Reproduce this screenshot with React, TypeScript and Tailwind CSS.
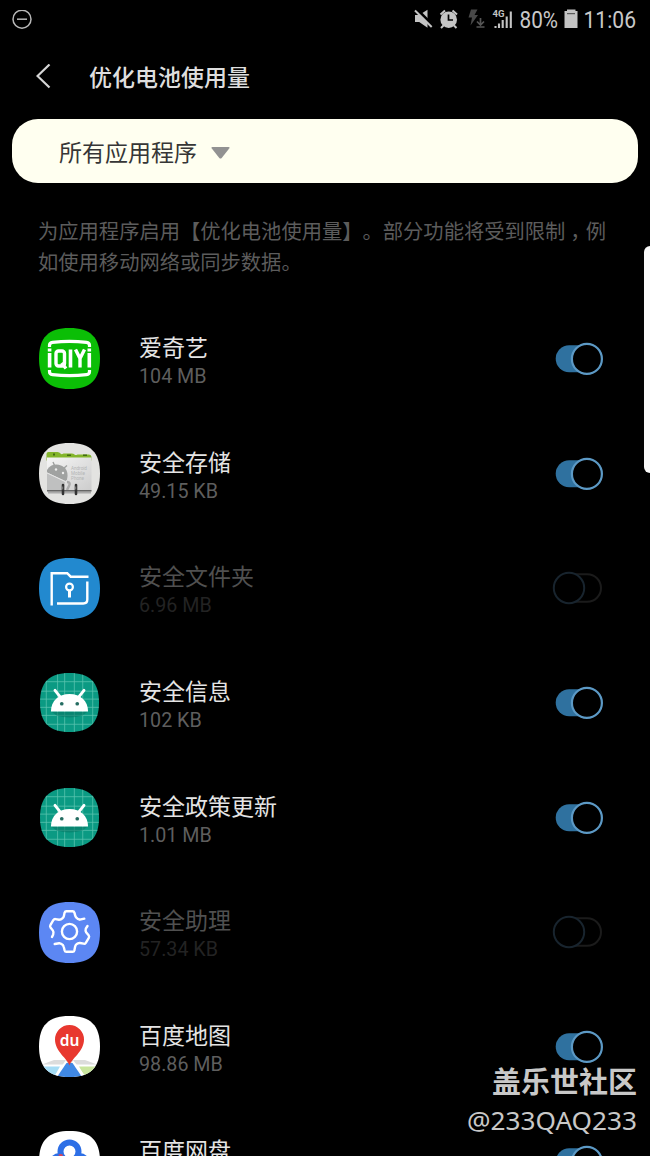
import type { ReactNode } from "react";

const SQUIRCLE = "M30.5 0C51.500 0 61 9.500 61 30.5S51.500 61 30.5 61S0 51.500 0 30.5S9.500 0 30.5 0Z";

function IconFrame({ id, fill, children }: { id: string; fill: string; children: ReactNode }) {
  return (
    <svg className="block h-[61px] w-[61px]" viewBox="0 0 61 61" fill="none">
      <clipPath id={id}>
        <path d={SQUIRCLE} />
      </clipPath>
      <g clipPath={`url(#${id})`}>
        <rect width="61" height="61" fill={fill} />
        {children}
      </g>
    </svg>
  );
}

function IqiyiIcon() {
  return (
    <IconFrame id="iqiyi" fill="#0bbe06">
      <path d="M10.500 19v-1.500c0-2 1-3 3-3.200q17-2 34 0c2 .2 3 1.200 3 3.200V19" stroke="#fff" strokeWidth="3.200" />
      <path d="M10.500 42v1.500c0 2 1 3 3 3.200q17 2 34 0c2-.2 3-1.200 3-3.200V42" stroke="#fff" strokeWidth="3.200" />
      <path d="M10.600 25v14.500M31.500 21.500v18M50.300 25v14.500M10.600 20.500v3M50.300 20.500v3" stroke="#fff" strokeWidth="3.600" />
      <rect x="17" y="23" width="8.500" height="15" rx="2.500" stroke="#fff" strokeWidth="3.400" />
      <path d="M22.500 35l4.500 5.500M36.500 21.500l4.500 9v9M45.500 21.500l-4.500 9" stroke="#fff" strokeWidth="3.400" />
    </IconFrame>
  );
}

function StorageIcon() {
  return (
    <IconFrame id="storage" fill="#e3e3e1">
      <defs>
        <linearGradient id="card" x1="0" y1="0" x2="1" y2="1">
          <stop offset="0" stopColor="#f6f6f6" />
          <stop offset="1" stopColor="#cccccc" />
        </linearGradient>
        <clipPath id="cardclip">
          <rect x="8" y="14" width="44.500" height="34" />
        </clipPath>
      </defs>
      <path d="M9 48.500h43v2H9z" fill="#aaa" />
      <path d="M7.500 11q0-2 2-2h9q2 0 3 1.500t3 0h8q2 0 3 1t3 0h11q3 0 3 3v3h-45z" fill="#83b52b" />
      <path d="M14 10.500h2v2h-2zM28 11.500h4v1.500h-4zM44 11.500h4v1.500h-4z" fill="#426a12" />
      <rect x="8" y="14.500" width="44.500" height="33.500" fill="url(#card)" />
      <g clipPath="url(#cardclip)">
        <path d="M7 29c3-7 9-9 15-6.500s7.500 8 6 14l-1.500 1.500L7 29z" fill="#a0a2a1" />
        <path d="M14 19l2 4.500M28 22.500l-3.500 3" stroke="#a0a2a1" strokeWidth="1.400" />
        <circle cx="17" cy="26.500" r="1.200" fill="#eee" />
        <circle cx="24" cy="30" r="1.200" fill="#eee" />
        <path d="M7 29.500l19 9-1 9.500H7z" fill="#bfc0c0" />
        <path d="M7 29.500l19 9" stroke="#e5e5e5" />
        <path d="M28 39q4 0 2 4l-2 4" stroke="#aaa" strokeWidth="2.500" />
      </g>
      <path d="M8 47.800h44.500" stroke="#666" strokeWidth="1.500" />
      <g fill="#b3b5b5" fontFamily="Roboto, sans-serif" fontSize="4.600">
        <text x="32" y="26.500">Android</text>
        <text x="32" y="31.500">Mobile</text>
        <text x="32" y="36.500">Phone</text>
      </g>
      <path d="M24 42v9M37 42v9" stroke="#333" strokeWidth="2.600" strokeLinecap="round" />
      <path d="M23.700 43.500v3M36.700 43.500v3" stroke="#888" strokeWidth="1" />
    </IconFrame>
  );
}

function FolderIcon() {
  return (
    <IconFrame id="folder" fill="#2289cf">
      <path d="M12.700 47.500V15.200h15.500l3.500 3.500H49.500" stroke="#fff" strokeWidth="2.400" />
      <path d="M48.300 23.500v18q0 4-4 4H18" stroke="#fff" strokeWidth="2.400" />
      <circle cx="30.500" cy="29" r="3.400" stroke="#fff" strokeWidth="2.200" />
      <path d="M30.500 32v7.500" stroke="#fff" strokeWidth="3" />
    </IconFrame>
  );
}

function AndroidIcon({ id }: { id: string }) {
  return (
    <svg className="mx-px mt-px mb-0.5 block h-[59px] w-[59px]" viewBox="0 0 61 61" fill="none">
      <clipPath id={id}>
        <path d={SQUIRCLE} />
      </clipPath>
      <g clipPath={`url(#${id})`}>
        <rect width="61" height="61" fill="#0b9a83" />
        <path
          d="M6.500 0v61M18.200 0v61M25.500 0v61M35.500 0v61M44.200 0v61M54.500 0v61M0 9h61M0 18.800h61M0 27h61M0 35.500h61M0 43.800h61M0 53h61"
          stroke="#5bc4af"
          strokeWidth=".8"
        />
        <path d="M12 40l5 4q13 4 27 0l5-4z" fill="#087866" opacity=".6" />
        <path d="M11.300 39.800c0-11 8-18.200 19.200-18.200s19.200 7.200 19.200 18.200z" fill="#fff" />
        <path d="M15.500 18l6 7.500M45.500 18l-6 7.500" stroke="#fff" strokeWidth="3" strokeLinecap="round" />
        <circle cx="22.500" cy="31.800" r="1.900" fill="#256d62" />
        <circle cx="38.500" cy="31.800" r="1.900" fill="#256d62" />
      </g>
    </svg>
  );
}

function GearIcon() {
  return (
    <IconFrame id="gear" fill="#5c87f3">
      <circle cx="30.500" cy="29.500" r="7.600" stroke="#fff" strokeWidth="2.400" />
      <path
        d="M13 35l1.200-2.600q.8-2.400-.4-4l-2.300-3q-.8-1.300 0-2.600l2.800-4.700q.8-1.200 2.200-1l3.600.6q2 0 3.300-1.300 1.200-1 1.500-2.500l.7-3.300q.4-1.300 1.800-1.300h6.200q1.400 0 1.800 1.300l.9 3.300q.5 2 2.500 3l2 .8 4.500-1"
        stroke="#fff"
        strokeWidth="2.400"
        strokeLinecap="round"
        strokeLinejoin="round"
      />
      <path
        d="M48.500 24l-1.700 2.700q-.7 2 .5 3.800l2.300 2.700q1 1.300.2 2.600l-3 5q-.8 1.200-2.200.9l-3.600-.7q-2-.2-3.400 1.200-1.200 1-1.500 2.500l-.7 3.600q-.4 1.400-1.800 1.400h-6.200q-1.400 0-1.800-1.400l-.9-3.600q-.4-2-2.500-2.900l-2-.6-4.500.8"
        stroke="#fff"
        strokeWidth="2.400"
        strokeLinecap="round"
        strokeLinejoin="round"
      />
    </IconFrame>
  );
}

function MapIcon() {
  return (
    <IconFrame id="map" fill="#fff">
      <path d="M15 44h31l12 4.500H3z" fill="#dcdcdc" />
      <path d="M0 50.500h21L15 61H0z" fill="#a5dcf5" />
      <path d="M40 50.500h21V61H46z" fill="#c9e59e" />
      <path d="M27 44L15 61h4l10-12zM34 44l13 17h-4L32 49z" fill="#fff" />
      <path d="M27.500 47h6L43 61H18z" fill="#4089e5" />
      <path d="M30.500 49.500c-2-7-14.500-14-14.500-26a14.500 14.500 0 0 1 29 0C45 35.500 32.500 42.500 30.500 49.500z" fill="#e8382f" />
      <text x="30.500" y="29.500" textAnchor="middle" fill="#fff" fontFamily="'Noto Sans', sans-serif" fontWeight="600" fontSize="15.500">
        du
      </text>
    </IconFrame>
  );
}

function DiskIcon() {
  return (
    <IconFrame id="disk" fill="#fff">
      <circle cx="20.500" cy="32.500" r="10.500" fill="#2d6fe6" />
      <circle cx="40.500" cy="32.500" r="10.500" fill="#2d6fe6" />
      <circle cx="30.500" cy="20.500" r="9" fill="#fff" stroke="#2d6fe6" strokeWidth="6" />
      <path d="M19 24q3-2 5 0l-1 2z" fill="#d9445a" />
    </IconFrame>
  );
}

function Toggle({ on }: { on: boolean }) {
  return on ? (
    <svg className="block h-9 w-[52px]" viewBox="0 0 52 36" fill="none">
      <rect x="3.700" y="4.300" width="40" height="27" rx="13.500" fill="#2f719f" />
      <circle cx="34.900" cy="17.900" r="15" fill="#000" stroke="#5c99c5" strokeWidth="2.200" />
    </svg>
  ) : (
    <svg className="block h-9 w-[52px]" viewBox="0 0 52 36" fill="none">
      <rect x="10" y="4.200" width="39" height="27.500" rx="13.750" stroke="#1b1b1b" strokeWidth="2" />
      <circle cx="17" cy="18" r="15.200" fill="#000" stroke="#18242e" strokeWidth="2" />
    </svg>
  );
}

const apps: { name: string; size: string; on: boolean; dim?: boolean; icon: ReactNode }[] = [
  { name: "爱奇艺", size: "104 MB", on: true, icon: <IqiyiIcon /> },
  { name: "安全存储", size: "49.15 KB", on: true, icon: <StorageIcon /> },
  { name: "安全文件夹", size: "6.96 MB", on: false, dim: true, icon: <FolderIcon /> },
  { name: "安全信息", size: "102 KB", on: true, icon: <AndroidIcon id="android-info" /> },
  { name: "安全政策更新", size: "1.01 MB", on: true, icon: <AndroidIcon id="android-policy" /> },
  { name: "安全助理", size: "57.34 KB", on: false, dim: true, icon: <GearIcon /> },
  { name: "百度地图", size: "98.86 MB", on: true, icon: <MapIcon /> },
  { name: "百度网盘", size: "", on: true, icon: <DiskIcon /> },
];

function StatusBar() {
  return (
    <header className="flex h-10 shrink-0 items-center justify-between pr-[14px] pl-3 text-[#c4c4c4]">
      <svg className="h-5 w-5" viewBox="0 0 20 20" fill="none" stroke="#b8b8b8" strokeWidth="1.500">
        <circle cx="10" cy="9.200" r="9" />
        <path d="M5 9.200h10" />
      </svg>
      <div className="flex h-10 items-center">
        <svg className="h-10 w-[112px]" viewBox="402 0 112 40" fill="none">
          <path d="M415 15h4.200l8.300-5.300v18l-8.300-5.700H415z" fill="#c4c4c4" />
          <path d="M416.500 9L433 25.500" stroke="#000" strokeWidth="3" />
          <path d="M415 10.500L431.700 27" stroke="#c4c4c4" strokeWidth="2" />
          <circle cx="448.700" cy="19.700" r="8.300" fill="#c4c4c4" />
          <path d="M440.500 14.500l4.500-4M457 14.500l-4.500-4M443.500 25.500l-2.500 2.500M454 25.500l2.500 2.500" stroke="#c4c4c4" strokeWidth="2" />
          <path d="M448.500 14.500V20h4.500" stroke="#000" strokeWidth="1.700" />
          <path d="M471 9.500h6.500l-3 5.500h3.500l-7.500 10.500 1.500-8h-3.500z" fill="#484848" />
          <path d="M480.500 18v6M477 21.500l3.500 3.500 3.500-3.500M476.500 27h8" stroke="#555" strokeWidth="1.700" />
          <text x="492.500" y="17.300" fill="#c4c4c4" fontFamily="Roboto, sans-serif" fontWeight="700" fontSize="9" textLength="12" lengthAdjust="spacingAndGlyphs">
            4G
          </text>
          <path d="M495.500 28v-2M499 28v-4.500M502.700 28v-8M506.700 28V16.500M510.800 28V11.500" stroke="#c4c4c4" strokeWidth="2.100" />
        </svg>
        <svg className="h-10 w-[136px]" viewBox="514 0 136 40" fill="none">
          <g fill="#c8c8c8" fontFamily="Roboto, sans-serif" fontSize="24.500">
            <text x="519.500" y="28" textLength="38.500" lengthAdjust="spacingAndGlyphs">80%</text>
            <text x="583.500" y="28" textLength="52.500" lengthAdjust="spacingAndGlyphs">11:06</text>
          </g>
          <path d="M567 9.500h8.500V11h2v17h-13V11h2.500z" fill="#c4c4c4" />
          <path d="M567 13.700h8" stroke="#444" strokeWidth="1" />
        </svg>
      </div>
    </header>
  );
}

export default function App() {
  return (
    <div className="relative flex h-[1156px] w-[650px] flex-col overflow-hidden bg-black font-['Roboto','Noto_Sans_CJK_SC',sans-serif] [text-spacing-trim:space-all]">
      <div className="-mr-[14px] w-[664px]">
        <StatusBar />
      </div>
      <div className="flex h-[79px] shrink-0 items-start pt-5 pl-9">
        <svg className="mt-1 h-8 w-5" viewBox="0 0 20 32" fill="none">
          <path d="M13.500 .5L1.500 12l12 11.500" stroke="#d5d5d5" strokeWidth="2.200" />
        </svg>
        <h1 className="mt-[3px] ml-[33px] text-[23px] leading-8 font-medium text-[#dedede]">优化电池使用量</h1>
      </div>
      <div className="ml-3 flex h-16 w-[626px] shrink-0 items-center rounded-[26px] bg-[#fffff0] pl-[47px]">
        <span className="pt-1.5 text-[23px] leading-8 text-[#363636]">所有应用程序</span>
        <svg className="mt-1 ml-[14px] h-3 w-[19px]" viewBox="0 0 19 12">
          <path d="M1.500 0h16q1.800.2.700 1.600L10.700 11q-1.200 1-2.400 0L.8 1.600Q-.2.200 1.500 0z" fill="#929292" />
        </svg>
      </div>
      <p className="mt-[34px] ml-[38px] h-[84.500px] shrink-0 text-[20.3px] leading-[31px] whitespace-nowrap text-[#5c5c5c]">
        为应用程序启用【优化电池使用量】。部分功能将受到限制<span className="inline-block w-[20.3px] indent-[5px]">，</span>例
        <br />
        如使用移动网络或同步数据。
      </p>
      <ul className="flex flex-col">
        {apps.map((app) => (
          <li key={app.name} className="flex h-[114.7px] shrink-0 items-center pr-[46px] pl-[39px]">
            {app.icon}
            <div className="ml-[39px] grow pt-[7px]">
              <div className={`text-[23px] leading-[30px] ${app.dim ? "text-[#505050]" : "text-[#e4e4e4]"}`}>{app.name}</div>
              <div className={`-mt-px h-7 text-[19.7px] leading-[28px] ${app.dim ? "text-[#232323]" : "text-[#5e5e5e]"}`}>
                {app.size}
              </div>
            </div>
            <Toggle on={app.on} />
          </li>
        ))}
      </ul>
      <div className="absolute top-[246px] left-[644px] h-[227px] w-3 rounded-l-[6px] bg-[#fafafa]" />
      <div className="absolute right-[13px] bottom-[18px] text-right text-[#c8c8c8]">
        <div className="text-[29px] leading-[38px] font-bold">盖乐世社区</div>
        <div className="font-['Noto_Sans',sans-serif] text-[26.2px] leading-9">@233QAQ233</div>
      </div>
    </div>
  );
}
